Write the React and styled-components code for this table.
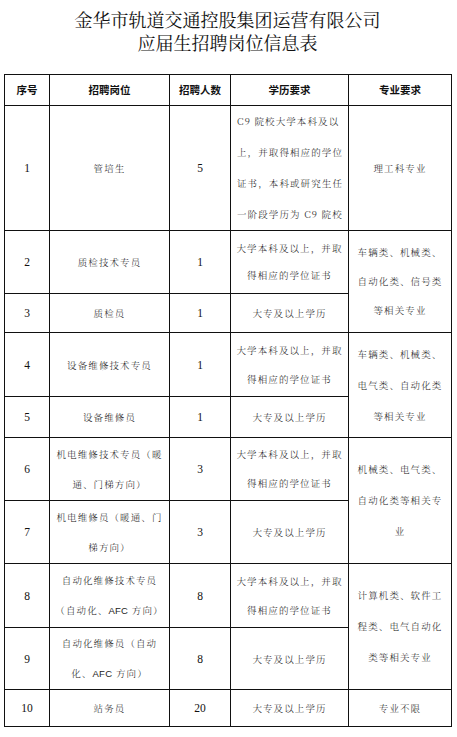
import React from "react";
import styled, { createGlobalStyle } from "styled-components";

const Global = createGlobalStyle`
  html, body { margin: 0; padding: 0; background: #fff; }
  body { width: 457px; height: 737px; overflow: hidden; }
`;

const Page = styled.div`
  padding: 8px 6px 0 4px;
  font-family: "Noto Serif CJK SC", "Noto Sans CJK SC", serif;
  color: #111;
`;

const Title = styled.h1`
  margin: 0 0 20px 0;
  text-align: center;
  font-family: "Noto Serif CJK SC", "Noto Sans CJK SC", serif;
  font-weight: 400;
  font-size: 18px;
  line-height: 23px;
  color: #111;
`;

const TitleLine = styled.span`
  display: block;
`;

const Table = styled.table`
  width: 447px;
  border-collapse: collapse;
  table-layout: fixed;
`;

const Row = styled.tr`
  height: ${(p) => p.$h}px;
`;

const Head = styled.th`
  border: 1px solid #111;
  padding: 0;
  font-family: "Noto Sans CJK SC", sans-serif;
  font-weight: 700;
  font-size: 10.5px;
  line-height: 14px;
  text-align: center;
  vertical-align: middle;
`;

const Cell = styled.td`
  border: 1px solid #111;
  padding: 0 ${(p) => (p.$pad != null ? p.$pad : 2)}px;
  text-align: ${(p) => p.$align || "center"};
  vertical-align: middle;
  font-family: "Noto Serif CJK SC", "Noto Sans CJK SC", serif;
  font-weight: 300;
  font-size: 9.5px;
  letter-spacing: 1.1px;
  line-height: ${(p) => p.$lh || 30}px;
  color: #222;
  white-space: nowrap;
`;

const Latin = styled.span`
  font-family: "Liberation Sans", sans-serif;
  letter-spacing: 0.3px;
  font-size: 9.5px;
`;

const Num = styled.td`
  border: 1px solid #111;
  padding: 0;
  text-align: center;
  vertical-align: middle;
  font-family: "Liberation Serif", serif;
  font-size: 11.5px;
  color: #111;
`;

const Lines = ({ items }) =>
  items.map((t, i) => (
    <React.Fragment key={i}>
      {i > 0 && <br />}
      {t}
    </React.Fragment>
  ));

const BEN = ["大学本科及以上，并取", "得相应的学位证书"];
const ZHUAN = ["大专及以上学历"];

export default function App() {
  return (
    <Page>
      <Global />
      <Title>
        <TitleLine>金华市轨道交通控股集团运营有限公司</TitleLine>
        <TitleLine>应届生招聘岗位信息表</TitleLine>
      </Title>
      <Table>
        <colgroup>
          <col style={{ width: 45 }} />
          <col style={{ width: 120 }} />
          <col style={{ width: 61 }} />
          <col style={{ width: 118 }} />
          <col style={{ width: 103 }} />
        </colgroup>
        <tbody>
          <Row $h={31}>
            <Head>序号</Head>
            <Head>招聘岗位</Head>
            <Head>招聘人数</Head>
            <Head>学历要求</Head>
            <Head>专业要求</Head>
          </Row>
          <Row $h={125}>
            <Num>1</Num>
            <Cell>管培生</Cell>
            <Num>5</Num>
            <Cell $align="left" $pad={6} $lh={31}>
              <Lines
                items={[
                  "C9 院校大学本科及以",
                  "上，并取得相应的学位",
                  "证书，本科或研究生任",
                  "一阶段学历为 C9 院校",
                ]}
              />
            </Cell>
            <Cell>理工科专业</Cell>
          </Row>
          <Row $h={63}>
            <Num>2</Num>
            <Cell>质检技术专员</Cell>
            <Num>1</Num>
            <Cell $lh={27}>
              <Lines items={BEN} />
            </Cell>
            <Cell rowSpan={2} $lh={29}>
              <Lines items={["车辆类、机械类、", "自动化类、信号类", "等相关专业"]} />
            </Cell>
          </Row>
          <Row $h={39}>
            <Num>3</Num>
            <Cell>质检员</Cell>
            <Num>1</Num>
            <Cell>
              <Lines items={ZHUAN} />
            </Cell>
          </Row>
          <Row $h={64}>
            <Num>4</Num>
            <Cell>设备维修技术专员</Cell>
            <Num>1</Num>
            <Cell $lh={29}>
              <Lines items={BEN} />
            </Cell>
            <Cell rowSpan={2} $lh={31}>
              <Lines items={["车辆类、机械类、", "电气类、自动化类", "等相关专业"]} />
            </Cell>
          </Row>
          <Row $h={41}>
            <Num>5</Num>
            <Cell>设备维修员</Cell>
            <Num>1</Num>
            <Cell>
              <Lines items={ZHUAN} />
            </Cell>
          </Row>
          <Row $h={63}>
            <Num>6</Num>
            <Cell $lh={30}>
              <Lines items={["机电维修技术专员（暖", "通、门梯方向）"]} />
            </Cell>
            <Num>3</Num>
            <Cell $lh={29}>
              <Lines items={BEN} />
            </Cell>
            <Cell rowSpan={2} $lh={31}>
              <Lines items={["机械类、电气类、", "自动化类等相关专", "业"]} />
            </Cell>
          </Row>
          <Row $h={63}>
            <Num>7</Num>
            <Cell $lh={30}>
              <Lines items={["机电维修员（暖通、门", "梯方向）"]} />
            </Cell>
            <Num>3</Num>
            <Cell>
              <Lines items={ZHUAN} />
            </Cell>
          </Row>
          <Row $h={64}>
            <Num>8</Num>
            <Cell $lh={30}>
              <Lines
                items={[
                  "自动化维修技术专员",
                  <>
                    （自动化、<Latin>AFC</Latin> 方向）
                  </>,
                ]}
              />
            </Cell>
            <Num>8</Num>
            <Cell $lh={29}>
              <Lines items={BEN} />
            </Cell>
            <Cell rowSpan={2} $lh={31}>
              <Lines items={["计算机类、软件工", "程类、电气自动化", "类等相关专业"]} />
            </Cell>
          </Row>
          <Row $h={62}>
            <Num>9</Num>
            <Cell $lh={30}>
              <Lines
                items={[
                  "自动化维修员（自动",
                  <>
                    化、<Latin>AFC</Latin> 方向）
                  </>,
                ]}
              />
            </Cell>
            <Num>8</Num>
            <Cell>
              <Lines items={ZHUAN} />
            </Cell>
          </Row>
          <Row $h={37}>
            <Num>10</Num>
            <Cell>站务员</Cell>
            <Num>20</Num>
            <Cell>
              <Lines items={ZHUAN} />
            </Cell>
            <Cell>专业不限</Cell>
          </Row>
        </tbody>
      </Table>
    </Page>
  );
}
